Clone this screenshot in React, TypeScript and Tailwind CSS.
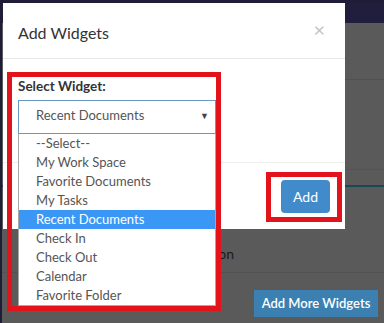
const options = [
  "--Select--",
  "My Work Space",
  "Favorite Documents",
  "My Tasks",
  "Recent Documents",
  "Check In",
  "Check Out",
  "Calendar",
  "Favorite Folder",
];

const font = { fontFamily: "Lato, 'Open Sans', sans-serif" };

const PageBehind = () => (
  <div className="flex h-full flex-col">
    <div className="h-[20px] bg-[#201e3c]" />
    <div className="h-[57px] border-b border-[#505050]" />
    <div className="h-[90px] border-b border-[#535353]" />
    <div className="mt-[15px] h-[2px] bg-[#1b4754]" />
    <div className="flex h-[86px] items-end border-b border-[#535353] pb-[8px]">
      <div className="w-[232px] text-right text-[14px] text-[#1c1c1c]">Notification</div>
    </div>
    <div className="flex justify-end pr-[6px] pt-[17px]">
      <button className="h-[27px] w-[124px] bg-[#3b80b0] text-[13px] font-semibold text-white">
        Add More Widgets
      </button>
    </div>
  </div>
);

export default function App() {
  return (
    <div
      className="relative h-[323px] w-[384px] overflow-hidden border-l-2 border-t-[3px] border-[#1e1c36] bg-[#5a5a5a]"
      style={font}
    >
      <PageBehind />

      {/* modal */}
      <div className="absolute left-[1px] top-0 flex h-[226px] w-[342px] flex-col bg-white">
        <div className="flex h-[56px] items-center justify-between border-b border-[#e8e8e8] pl-[15px] pr-[20px]">
          <div className="mt-[4px] text-[16px] text-[#333]">Add Widgets</div>
          <div className="mb-[4px] text-[20px] leading-none text-[#c4c4c4]">×</div>
        </div>
        <div className="h-[104px] border-b border-[#eeeeee] px-[15px] pt-[18px]">
          <div className="text-[13.5px] font-bold leading-[18px] text-[#333]">Select Widget:</div>
          <div className="mt-[5px] flex h-[34px] w-[198px] items-center justify-between border border-[#6a98c0] pb-[2px] pl-[17px] pr-[6px] text-[13px] text-[#555]">
            <span>Recent Documents</span>
            <span className="text-[9px] text-[#444]">▼</span>
          </div>
        </div>
        <div className="flex justify-end pr-[15px] pt-[17px]">
          <button className="h-[33px] w-[49px] rounded-[4px] bg-[#428bca] text-[14px] text-white">
            Add
          </button>
        </div>
      </div>

      {/* open dropdown list */}
      <div className="absolute left-[16px] top-[131px] w-[198px] border border-t-0 border-[#a7a7a7] bg-white">
        {options.map((o) => (
          <div
            key={o}
            className={
              "h-[19px] pl-[17px] text-[13px] leading-[19px] " +
              (o === "Recent Documents" ? "bg-[#3b97f6] text-white" : "text-[#555]")
            }
          >
            {o}
          </div>
        ))}
      </div>

      {/* annotation boxes */}
      <div className="absolute left-[5px] top-[69px] h-[239px] w-[214px] border-[5px] border-[#e3131b]" />
      <div className="absolute left-[264px] top-[169px] h-[50px] w-[76px] border-[5px] border-[#e3131b]" />
    </div>
  );
}
